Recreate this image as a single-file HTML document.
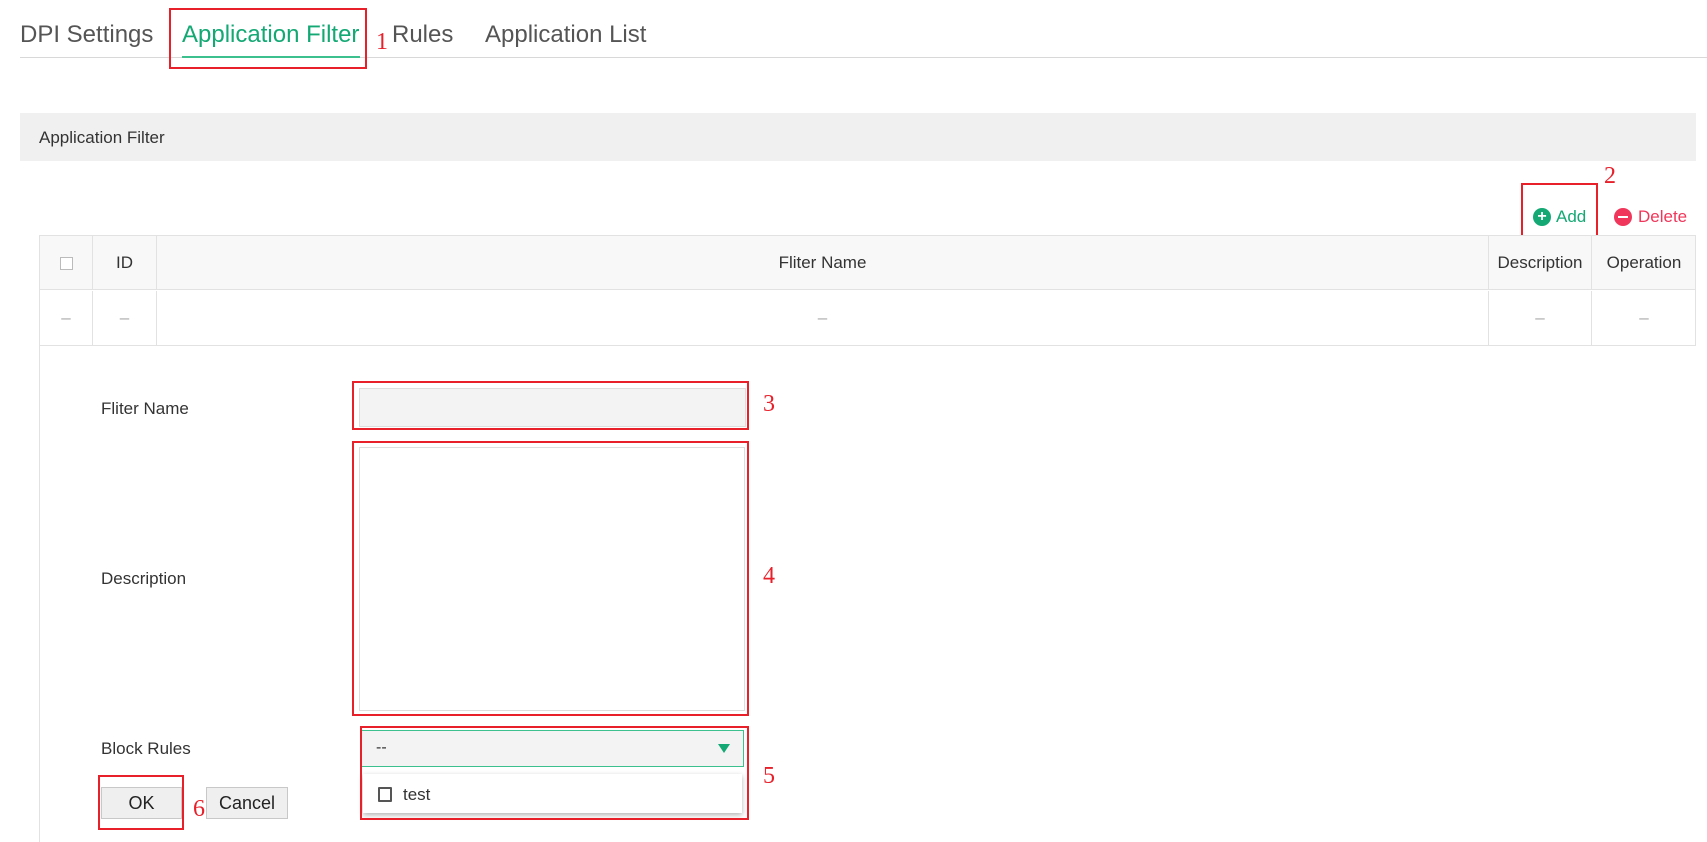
<!DOCTYPE html>
<html><head><meta charset="utf-8"><style>
*{box-sizing:border-box;margin:0;padding:0}
body{width:1707px;height:842px;background:#fff;font-family:"Liberation Sans",sans-serif;color:#333;position:relative;overflow:hidden}
.a{position:absolute}
.tab{position:absolute;top:21px;font-size:24px;color:#555;white-space:nowrap}
.red{position:absolute;border:2px solid #e8202a}
.num{position:absolute;font-family:"Liberation Serif",serif;color:#e8202a;font-size:24px;line-height:1}
.lbl{position:absolute;font-size:17px;color:#333;left:101px}
.cell{position:absolute;border-right:1px solid #e2e2e2;display:flex;align-items:center;justify-content:center;font-size:17px;color:#333}
.dash{color:#aaa}
.btn{position:absolute;background:#efefef;border:1px solid #c8c8c8;font-size:18px;display:flex;align-items:center;justify-content:center;color:#222}
</style></head><body>
<div class="tab" style="left:20px">DPI Settings</div>
<div class="tab" style="left:182px;color:#13a874">Application Filter</div>
<div class="tab" style="left:392px">Rules</div>
<div class="tab" style="left:485px">Application List</div>
<div class="a" style="left:20px;top:57px;width:1687px;height:1px;background:#d8d8d8"></div>
<div class="a" style="left:182px;top:56px;width:178px;height:2px;background:#3cc08e"></div>
<div class="red" style="left:169px;top:8px;width:198px;height:61px"></div>
<div class="num" style="left:376px;top:30px">1</div>

<div class="a" style="left:20px;top:113px;width:1676px;height:48px;background:#f0f0f0"></div>
<div class="a" style="left:39px;top:128px;font-size:17px;color:#333">Application Filter</div>

<div class="num" style="left:1604px;top:164px">2</div>
<div class="red" style="left:1521px;top:183px;width:77px;height:55px"></div>
<div class="a" style="left:1533px;top:208px;width:18px;height:18px;border-radius:50%;background:#13a874;color:#fff;font-size:16px;font-weight:bold;line-height:18px;text-align:center">+</div>
<div class="a" style="left:1556px;top:207px;font-size:17px;color:#13a874">Add</div>
<div class="a" style="left:1614px;top:208px;width:18px;height:18px;border-radius:50%;background:#f0365a"><div style="position:absolute;left:4px;top:8px;width:10px;height:2px;background:#fff"></div></div>
<div class="a" style="left:1638px;top:207px;font-size:17px;color:#f0365a">Delete</div>

<div class="a" style="left:39px;top:235px;width:1657px;height:110px;border:1px solid #e2e2e2;border-bottom:none"></div>
<div class="a" style="left:39px;top:235px;width:1657px;height:55px;background:#f8f8f8;border:1px solid #e2e2e2"></div>
<div class="a" style="left:39px;top:345px;width:1657px;height:1px;background:#e2e2e2"></div>
<div class="a" style="left:39px;top:235px;width:1px;height:607px;background:#e2e2e2"></div>
<div class="cell" style="left:40px;top:236px;width:53px;height:54px"><span style="width:13px;height:13px;border:1px solid #bbb;background:#fff;display:block"></span></div>
<div class="cell" style="left:93px;top:236px;width:64px;height:54px">ID</div>
<div class="cell" style="left:157px;top:236px;width:1332px;height:54px">Fliter Name</div>
<div class="cell" style="left:1489px;top:236px;width:103px;height:54px">Description</div>
<div class="cell" style="left:1592px;top:236px;width:104px;height:54px;border-right:none">Operation</div>
<div class="cell dash" style="left:40px;top:291px;width:53px;height:54px">–</div>
<div class="cell dash" style="left:93px;top:291px;width:64px;height:54px">–</div>
<div class="cell dash" style="left:157px;top:291px;width:1332px;height:54px">–</div>
<div class="cell dash" style="left:1489px;top:291px;width:103px;height:54px">–</div>
<div class="cell dash" style="left:1592px;top:291px;width:104px;height:54px;border-right:none">–</div>

<div class="lbl" style="top:399px">Fliter Name</div>
<div class="lbl" style="top:569px">Description</div>
<div class="lbl" style="top:739px">Block Rules</div>

<div class="a" style="left:359px;top:388px;width:387px;height:39px;background:#f3f3f3;border:1px solid #ddd"></div>
<div class="red" style="left:352px;top:381px;width:397px;height:49px"></div>
<div class="num" style="left:763px;top:392px">3</div>

<div class="a" style="left:359px;top:447px;width:386px;height:264px;border:1px solid #ddd;background:#fff"></div>
<div class="red" style="left:352px;top:441px;width:397px;height:275px"></div>
<div class="num" style="left:763px;top:564px">4</div>

<div class="a" style="left:361px;top:730px;width:383px;height:37px;background:#f3f3f3;border:1px solid #3cc08e"></div>
<div class="a" style="left:376px;top:739px;font-size:16px;color:#333">--</div>
<div class="a" style="left:718px;top:744px;width:0;height:0;border-left:6px solid transparent;border-right:6px solid transparent;border-top:9px solid #13a874"></div>
<div class="a" style="left:363px;top:774px;width:379px;height:39px;background:#fff;box-shadow:0 2px 5px rgba(0,0,0,.3)"></div>
<div class="a" style="left:378px;top:787px;width:14px;height:15px;border:2px solid #555;border-radius:1px"></div>
<div class="a" style="left:403px;top:785px;font-size:17px;color:#333">test</div>
<div class="red" style="left:360px;top:726px;width:389px;height:94px"></div>
<div class="num" style="left:763px;top:764px">5</div>

<div class="btn" style="left:101px;top:787px;width:81px;height:32px">OK</div>
<div class="btn" style="left:206px;top:787px;width:82px;height:32px">Cancel</div>
<div class="red" style="left:98px;top:775px;width:86px;height:55px"></div>
<div class="num" style="left:193px;top:797px">6</div>
</body></html>
